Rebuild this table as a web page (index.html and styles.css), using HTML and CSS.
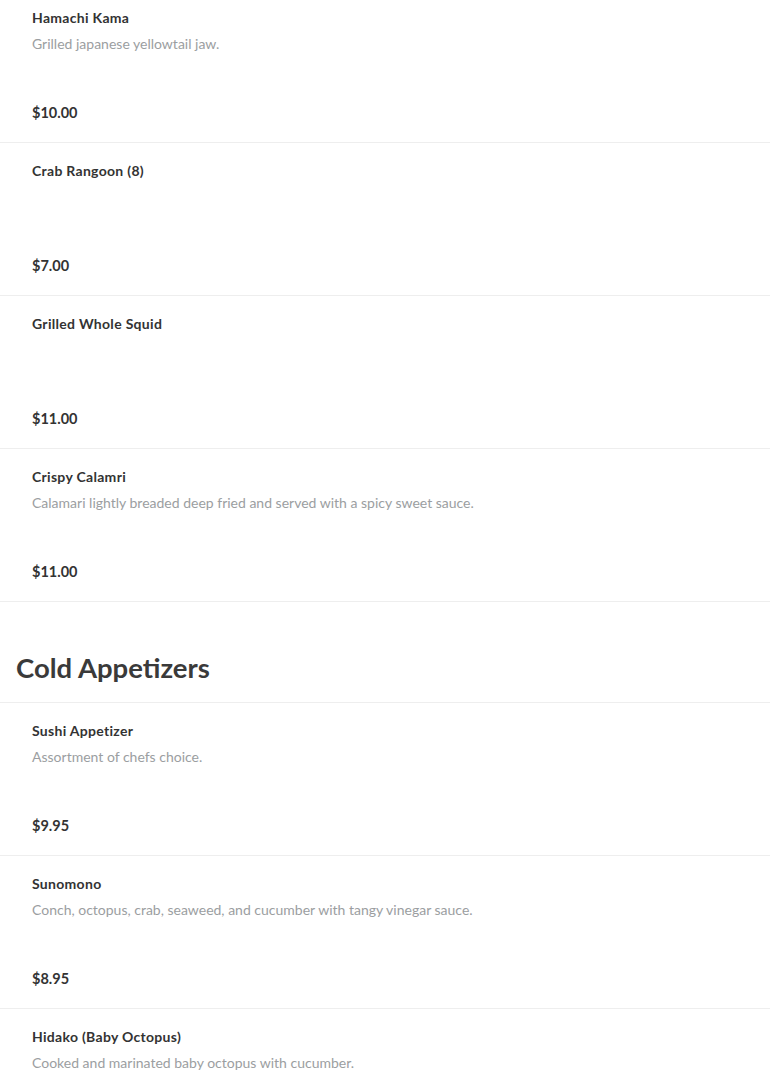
FILE: index.html
```html
<!DOCTYPE html>
<html>
<head>
    <meta charset="utf-8">
    <meta name="viewport" content="width=device-width, initial-scale=1">
    <title>Menu</title>
    <link rel="stylesheet" href="styles.css">
</head>
<body>
    <div class="menu">
        <section class="menu-section">
            <div class="menu-item">
                <h3 class="item-name">Hamachi Kama</h3>
                <p class="item-desc">Grilled japanese yellowtail jaw.</p>
                <div class="item-price">$10.00</div>
            </div>
            <div class="menu-item">
                <h3 class="item-name">Crab Rangoon (8)</h3>
                <p class="item-desc"></p>
                <div class="item-price">$7.00</div>
            </div>
            <div class="menu-item">
                <h3 class="item-name">Grilled Whole Squid</h3>
                <p class="item-desc"></p>
                <div class="item-price">$11.00</div>
            </div>
            <div class="menu-item">
                <h3 class="item-name">Crispy Calamri</h3>
                <p class="item-desc">Calamari lightly breaded deep fried and served with a spicy sweet sauce.</p>
                <div class="item-price">$11.00</div>
            </div>
        </section>

        <section class="menu-section">
            <h2 class="section-title">Cold Appetizers</h2>
            <div class="menu-item">
                <h3 class="item-name">Sushi Appetizer</h3>
                <p class="item-desc">Assortment of chefs choice.</p>
                <div class="item-price">$9.95</div>
            </div>
            <div class="menu-item">
                <h3 class="item-name">Sunomono</h3>
                <p class="item-desc">Conch, octopus, crab, seaweed, and cucumber with tangy vinegar sauce.</p>
                <div class="item-price">$8.95</div>
            </div>
            <div class="menu-item">
                <h3 class="item-name">Hidako (Baby Octopus)</h3>
                <p class="item-desc">Cooked and marinated baby octopus with cucumber.</p>
                <div class="item-price">$8.95</div>
            </div>
        </section>
    </div>
</body>
</html>
```

FILE: styles.css
```css
body {
    font-family: Lato, "Open Sans", sans-serif;
    background: #fff;
    color: #333;
    margin: 0;
}
.menu {
    margin-top: -10px;
}
.section-title {
    font-size: 27.5px;
    line-height: 34px;
    font-weight: 700;
    color: #3a3a3a;
    margin: 49px 0 0;
    padding: 0 16px 17px;
    border-bottom: 1px solid #eee;
}
.menu-item {
    padding: 18px 32px 17px;
    border-bottom: 1px solid #eee;
}
.item-name {
    font-size: 14px;
    line-height: 20px;
    font-weight: 700;
    letter-spacing: 0.3px;
    margin: 0;
    color: #333;
}
.item-desc {
    font-size: 14px;
    line-height: 24px;
    min-height: 24px;
    margin: 4px 0 0;
    color: #9b9ea1;
}
.item-price {
    font-size: 14.5px;
    line-height: 24px;
    font-weight: 700;
    margin-top: 45px;
    color: #333;
}
```
